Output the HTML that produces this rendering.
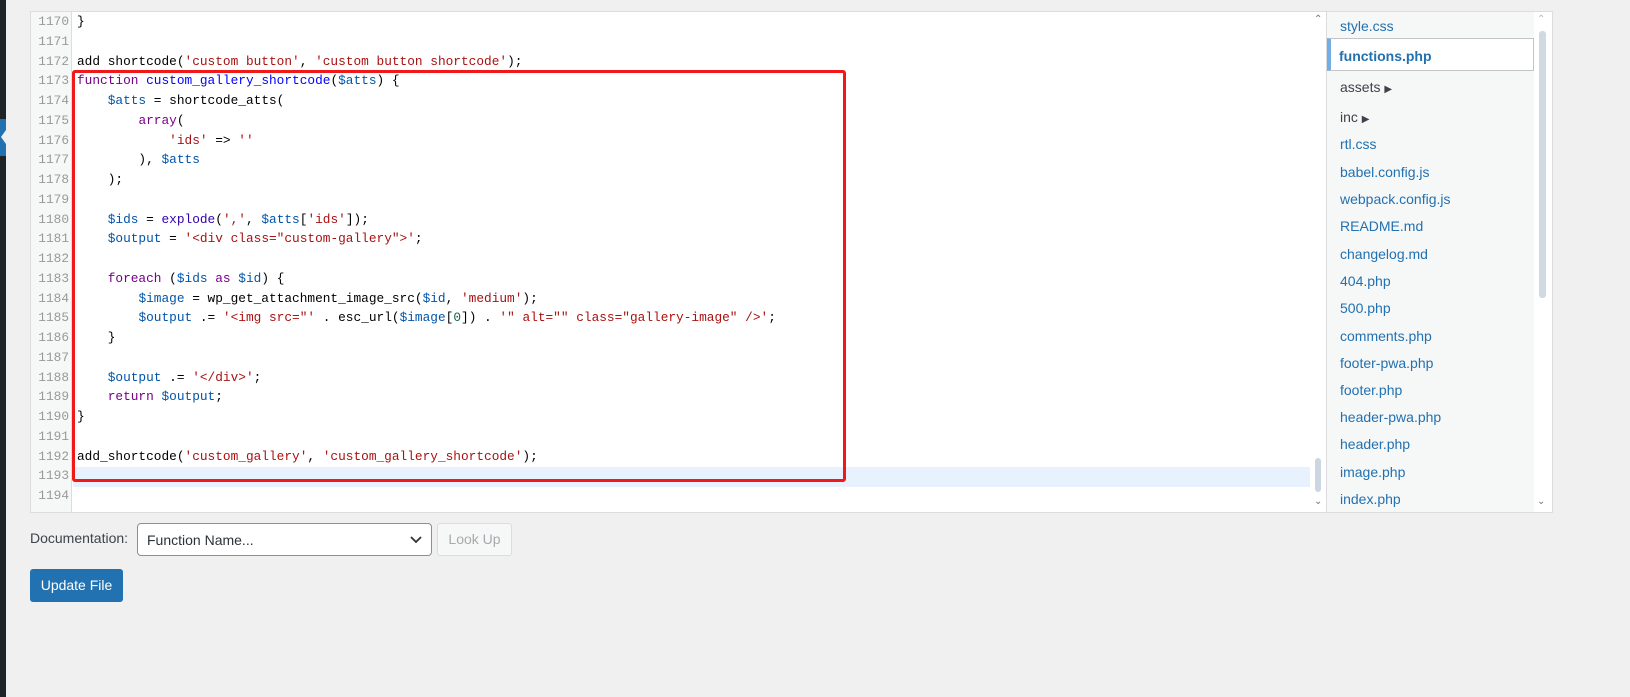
<!DOCTYPE html>
<html><head><meta charset="utf-8"><style>
*{box-sizing:border-box;margin:0;padding:0}
body{width:1630px;height:697px;background:#f0f0f1;position:relative;overflow:hidden;font-family:"Liberation Sans",sans-serif}
.strip{position:absolute;left:0;top:0;width:6px;height:697px;background:#1d2327}
.tab{position:absolute;left:0;top:119px;width:6px;height:37px;background:#2271b1}
.notch{position:absolute;left:1px;top:130px;width:0;height:0;border-top:7px solid transparent;border-bottom:7px solid transparent;border-right:5px solid #f0f0f1}
.ed{position:absolute;left:30px;top:11px;width:1297px;height:502px;background:#fff;border:1px solid #dcdcde;overflow:hidden}
.gut{position:absolute;left:0;top:0;width:41px;height:100%;background:#f6f7f7;border-right:1px solid #ddd}
.ln{position:absolute;left:0;width:38px;text-align:right;font:12.8px/19.75px "Liberation Mono",monospace;color:#999}
.code{position:absolute;left:46px;top:0;font:12.8px/19.75px "Liberation Mono",monospace;color:#000;white-space:pre}
.k{color:#708}.v{color:#05a}.s{color:#a11}.d{color:#00f}.b{color:#30a}.n{color:#164}
.act{position:absolute;left:42px;top:455px;width:1237px;height:20px;background:#e8f2ff}
.red{position:absolute;left:72px;top:70px;width:774px;height:412px;border:3px solid #f01818;border-radius:3px}
.sb{position:absolute;left:1279px;top:0;width:17px;height:100%;background:#fff}
.thumb{position:absolute;left:1284px;top:446px;width:6px;height:34px;background:#ccd6e0;border-radius:3px}
.side{position:absolute;left:1327px;top:11px;width:226px;height:502px;background:#f6f7f7;border:1px solid #dcdcde;border-left:none}
.it{position:absolute;left:13px;font-size:14px;color:#2271b1}
.cur{position:absolute;left:0;top:26px;width:207px;height:33px;background:#fff;border:1px solid #c3c4c7;border-left:4px solid #72aee6}
.ssb{position:absolute;left:207px;top:0;width:18px;height:100%;background:#fff}
.sth{position:absolute;left:212px;top:19px;width:7px;height:267px;background:#d0dae3;border-radius:3px}
.arr{position:absolute;font-size:10px;color:#777}
.lab{position:absolute;left:30px;top:530px;font-size:14px;color:#3c434a}
.sel{position:absolute;left:137px;top:523px;width:295px;height:33px;border:1px solid #8c8f94;border-radius:4px;background:#fff;font-size:14px;color:#2c3338;padding:8px 9px}
.lk{position:absolute;left:437px;top:523px;width:75px;height:33px;border:1px solid #dcdcde;border-radius:3px;background:#f6f7f7;color:#a7aaad;font-size:14px;text-align:center;line-height:31px}
.up{position:absolute;left:30px;top:569px;width:93px;height:33px;background:#2271b1;border-radius:3px;color:#fff;font-size:14px;text-align:center;line-height:32px}
</style></head><body>
<div class="strip"></div><div class="tab"></div><div class="notch"></div>
<div class="ed">
<div class="gut"></div>
<div class="act"></div>
<div class="ln" style="top:0">1170<br>1171<br>1172<br>1173<br>1174<br>1175<br>1176<br>1177<br>1178<br>1179<br>1180<br>1181<br>1182<br>1183<br>1184<br>1185<br>1186<br>1187<br>1188<br>1189<br>1190<br>1191<br>1192<br>1193<br>1194</div>
<div class="code">}

add shortcode(<span class="s">'custom button'</span>, <span class="s">'custom button shortcode'</span>);
<span class="k">function</span> <span class="d">custom_gallery_shortcode</span>(<span class="v">$atts</span>) {
    <span class="v">$atts</span> = shortcode_atts(
        <span class="k">array</span>(
            <span class="s">'ids'</span> =&gt; <span class="s">''</span>
        ), <span class="v">$atts</span>
    );

    <span class="v">$ids</span> = <span class="b">explode</span>(<span class="s">','</span>, <span class="v">$atts</span>[<span class="s">'ids'</span>]);
    <span class="v">$output</span> = <span class="s">'&lt;div class="custom-gallery"&gt;'</span>;

    <span class="k">foreach</span> (<span class="v">$ids</span> <span class="k">as</span> <span class="v">$id</span>) {
        <span class="v">$image</span> = wp_get_attachment_image_src(<span class="v">$id</span>, <span class="s">'medium'</span>);
        <span class="v">$output</span> .= <span class="s">'&lt;img src="'</span> . esc_url(<span class="v">$image</span>[<span class="n">0</span>]) . <span class="s">'" alt="" class="gallery-image" /&gt;'</span>;
    }

    <span class="v">$output</span> .= <span class="s">'&lt;/div&gt;'</span>;
    <span class="k">return</span> <span class="v">$output</span>;
}

add_shortcode(<span class="s">'custom_gallery'</span>, <span class="s">'custom_gallery_shortcode'</span>);
</div>
<div class="sb"></div><div class="thumb"></div>
<div class="arr" style="left:1283px;top:2px">&#8963;</div>
<div class="arr" style="left:1283px;top:484px">&#8964;</div>
</div>
<div class="red"></div>
<div class="side">
<div class="cur"></div>
<div class="it" style="top:6px">style.css</div>
<div class="it" style="top:36px;font-weight:bold;color:#2271b1;left:12px">functions.php</div>
<div class="it" style="top:67px;color:#3c434a">assets <span style="font-size:10px">&#9654;</span></div>
<div class="it" style="top:97px;color:#3c434a">inc <span style="font-size:10px">&#9654;</span></div>
<div class="it" style="top:124px">rtl.css</div>
<div class="it" style="top:152px">babel.config.js</div>
<div class="it" style="top:179px">webpack.config.js</div>
<div class="it" style="top:206px">README.md</div>
<div class="it" style="top:234px">changelog.md</div>
<div class="it" style="top:261px">404.php</div>
<div class="it" style="top:288px">500.php</div>
<div class="it" style="top:316px">comments.php</div>
<div class="it" style="top:343px">footer-pwa.php</div>
<div class="it" style="top:370px">footer.php</div>
<div class="it" style="top:397px">header-pwa.php</div>
<div class="it" style="top:424px">header.php</div>
<div class="it" style="top:452px">image.php</div>
<div class="it" style="top:479px">index.php</div>
<div class="ssb"></div><div class="sth"></div>
<div class="arr" style="left:210px;top:2px;color:#bbb">&#8963;</div>
<div class="arr" style="left:210px;top:484px">&#8964;</div>
</div>
<div class="lab">Documentation:</div>
<div class="sel">Function Name...<svg style="position:absolute;right:9px;top:12px" width="12" height="8" viewBox="0 0 12 8"><path d="M1 1l5 5 5-5" fill="none" stroke="#2c3338" stroke-width="1.8"/></svg></div>
<div class="lk">Look Up</div>
<div class="up">Update File</div>
</body></html>
